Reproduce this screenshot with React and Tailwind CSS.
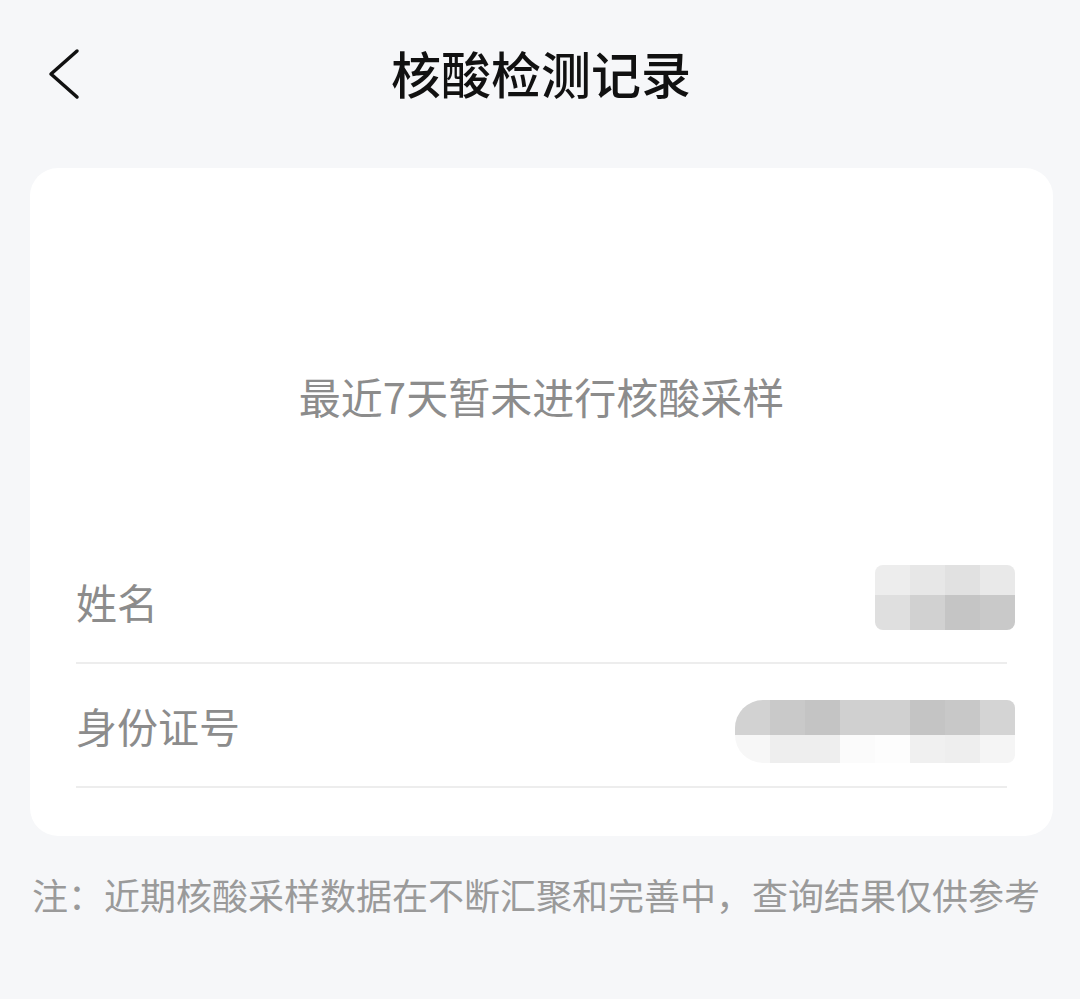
import React from 'react';

const FONT = { fontFamily: '"Noto Sans CJK SC", "Noto Sans", sans-serif' };

// mosaic blur blocks that hide the personal data
const nameBlocks = [
  ['#ededed', '#e7e7e7', '#e1e1e1', '#e9e9e9'],
  ['#dfdfdf', '#d1d1d1', '#c5c5c5', '#c9c9c9'],
];

const idBlocks = [
  ['#d2d2d2', '#c9c9c9', '#c4c4c4', '#d0d0d0', '#d0d0d0', '#c4c4c4', '#c8c8c8', '#d4d4d4'],
  ['#f7f7f7', '#eeeeee', '#eeeeee', '#fbfbfb', '#fdfdfd', '#f0f0f0', '#eeeeee', '#f5f5f5'],
];

const Mosaic = ({ blocks, rowHeights, className }) => (
  <div className={`flex flex-col overflow-hidden ${className}`}>
    {blocks.map((row, i) => (
      <div key={i} className="flex" style={{ height: rowHeights[i] }}>
        {row.map((c, j) => (
          <div key={j} className="w-[35px] h-full" style={{ background: c }} />
        ))}
      </div>
    ))}
  </div>
);

const InfoRow = ({ label, children }) => (
  <div className="flex items-center justify-between h-[124px] border-b-2 border-[#ededed]">
    <span className="text-[41px] leading-none text-[#8c8c8c]">{label}</span>
    {children}
  </div>
);

export default function App() {
  return (
    <div className="w-[1080px] h-[999px] bg-[#f6f7f9] overflow-hidden" style={FONT}>
      {/* Header */}
      <div className="relative h-[168px] flex justify-center pt-[46px]">
        <button className="absolute left-[46px] top-[48px]">
          <svg width="36" height="52" viewBox="0 0 36 52" fill="none">
            <polyline points="31,3 5,26 31,49" stroke="#111" strokeWidth="3.5" strokeLinecap="round" strokeLinejoin="round" />
          </svg>
        </button>
        <h1 className="text-[50px] leading-[52px] font-medium text-[#111] pl-[2px]">核酸检测记录</h1>
      </div>

      {/* Card */}
      <div className="mx-[30px] w-[1023px] bg-white rounded-[28px] px-[46px] pt-[205px] pb-[48px]">
        <p className="text-center text-[42px] leading-[46px] text-[#8c8c8c]">最近7天暂未进行核酸采样</p>
        <div className="mt-[121px]">
          <InfoRow label="姓名">
            <Mosaic blocks={nameBlocks} rowHeights={[30, 35]} className="rounded-[8px] mr-[-8px] mb-[8px]" />
          </InfoRow>
          <InfoRow label="身份证号">
            <Mosaic blocks={idBlocks} rowHeights={[35, 28]} className="rounded-l-[28px] rounded-r-[8px] mr-[-8px] mt-[12px]" />
          </InfoRow>
        </div>
      </div>

      {/* Footer note */}
      <p className="mt-[36px] pl-[32px] text-[36px] leading-[44px] whitespace-nowrap text-[#9a9a9a]">注：近期核酸采样数据在不断汇聚和完善中，查询结果仅供参考</p>
    </div>
  );
}
